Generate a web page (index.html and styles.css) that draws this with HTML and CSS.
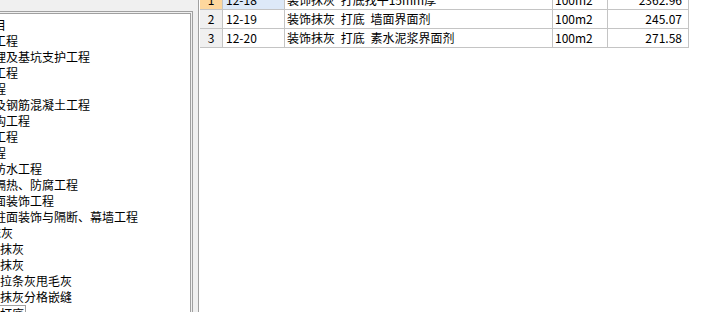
FILE: index.html
```html
<!DOCTYPE html>
<html lang="zh-CN">
<head>
    <meta charset="UTF-8">
    <title>定额库</title>
    <link rel="stylesheet" href="styles.css">
</head>
<body>

<div class="app">
    <div class="side">
        <div class="tree-frame">
            <ul class="tree">
                <li class="root">全部定额项目</li>
                <li class="chapter">土石方工程</li>
                <li class="chapter">地基处理及基坑支护工程</li>
                <li class="chapter">桩基础工程</li>
                <li class="chapter">砌筑工程</li>
                <li class="chapter">混凝土及钢筋混凝土工程</li>
                <li class="chapter">金属结构工程</li>
                <li class="chapter">木结构工程</li>
                <li class="chapter">门窗工程</li>
                <li class="chapter">屋面及防水工程</li>
                <li class="chapter">保温、隔热、防腐工程</li>
                <li class="chapter">楼面地面装饰工程</li>
                <li class="chapter">墙面、柱面装饰与隔断、幕墙工程</li>
                <li class="section">一般抹灰</li>
                <li class="item">装饰抹灰</li>
                <li class="item">镶贴抹灰</li>
                <li class="item">墙面拉条灰甩毛灰</li>
                <li class="item">墙面抹灰分格嵌缝</li>
                <li class="item"><span class="focus">墙面打底</span></li>
            </ul>
        </div>
    </div>

    <div class="main">
        <div class="grid">
            <div class="row current">
                <span class="num">1</span>
                <span class="code">12-18</span>
                <span class="name">装饰抹灰 打底找平15mm厚</span>
                <span class="unit">100m2</span>
                <span class="price">2362.96</span>
            </div>
            <div class="row">
                <span class="num">2</span>
                <span class="code">12-19</span>
                <span class="name">装饰抹灰 打底 墙面界面剂</span>
                <span class="unit">100m2</span>
                <span class="price">245.07</span>
            </div>
            <div class="row">
                <span class="num">3</span>
                <span class="code">12-20</span>
                <span class="name">装饰抹灰 打底 素水泥浆界面剂</span>
                <span class="unit">100m2</span>
                <span class="price">271.58</span>
            </div>
        </div>
    </div>
</div>

</body>
</html>
```

FILE: styles.css
```css
body {
    margin: 0;
    font-family: "Noto Sans CJK SC", sans-serif;
    font-size: 12px;
    color: #000;
    overflow: hidden;
}

.app {
    display: flex;
    height: 312px;
    background-color: #f0f0f0;
}

/* left tree */
.side {
    flex: none;
    width: 198px;
    padding-top: 11px;
    box-sizing: border-box;
}

.tree-frame {
    width: 193px;
    height: 100%;
    box-sizing: border-box;
    border: 1px solid #a0a0a0;
    border-left: none;
    border-bottom: none;
    padding: 1px 1px 0 0;
}

.tree {
    list-style: none;
    margin: 0;
    padding: 3px 0 0 0;
    height: 100%;
    box-sizing: border-box;
    background-color: #fff;
    border: 1px solid #a0a0a0;
    border-left: none;
    border-bottom: none;
    overflow: hidden;
}

.tree li {
    height: 16px;
    line-height: 16px;
    white-space: nowrap;
}

.tree .root { margin-left: -66px; }
.tree .chapter { margin-left: -42px; }
.tree .section { margin-left: -35px; }
.tree .item { margin-left: -24px; }

.focus {
    display: inline-block;
    height: 15px;
    line-height: 15px;
    padding-right: 1px;
    border: 1px solid #a0a0a0;
    border-left: none;
}

/* right grid */
.main {
    flex: 1;
    background-color: #fff;
    border-left: 1px solid #a0a0a0;
}

.grid {
    margin: -9px 0 0 1px;
}

.row {
    display: grid;
    grid-template-columns: 23px 62px 268px 55px 81px;
    height: 19px;
}

.row span {
    box-sizing: border-box;
    border-right: 1px solid #c4c4c4;
    border-bottom: 1px solid #c4c4c4;
    line-height: 18px;
    padding: 0 3px;
    white-space: nowrap;
    overflow: hidden;
}

.row .num {
    background-color: #f0f0f0;
    text-align: center;
    padding: 0;
}

.row .name {
    padding-left: 2px;
    word-spacing: 3px;
}

.row .unit {
    padding-left: 2px;
}

.row .price {
    text-align: right;
    padding-right: 6px;
}

.row.current .num {
    background-color: #fdd79d;
}

.row.current .code {
    background-color: #dde9f8;
}
```
